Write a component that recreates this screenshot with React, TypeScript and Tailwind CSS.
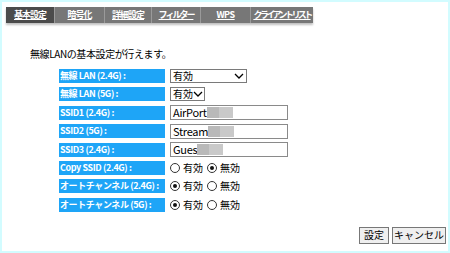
import React from 'react';

const tabs = [
  { label: '基本設定', w: 'w-[48px]', track: 'tracking-[-1px]' },
  { label: '暗号化', w: 'w-[50px]', track: 'tracking-[-1px]' },
  { label: '詳細設定', w: 'w-[47px]', track: 'tracking-[-1px]' },
  { label: 'フィルター', w: 'w-[49px]', track: 'tracking-[-2px]' },
  { label: 'WPS', w: 'w-[50px]', track: 'tracking-[-0.5px]' },
  { label: 'クライアントリスト', w: 'w-[63px]', track: 'tracking-[-2.6px]' },
];

const Label = ({ children }: { children: React.ReactNode }) => (
  <div className="w-[106px] h-[14px] bg-[#1ea5f7] text-white text-[9px] leading-[14px] pl-[1px] font-semibold tracking-[-0.4px] whitespace-nowrap overflow-hidden">
    {children}
  </div>
);

const Chevron = () => (
  <svg width="10" height="6" viewBox="0 0 10 6" className="shrink-0">
    <path d="M1 1 L5 5 L9 1" fill="none" stroke="#000" strokeWidth="1.3" />
  </svg>
);

const Select = ({ wide }: { wide?: boolean }) => (
  <div className={`${wide ? 'w-[77px]' : 'w-[35px]'} h-[14px] border border-[#7a7a7a] bg-white flex items-center justify-between pl-[2px] pr-[2px] text-[10px] leading-none whitespace-nowrap`}>
    <span>有効</span>
    <Chevron />
  </div>
);

const TextInput = ({ value }: { value: string }) => (
  <div className="w-[118px] h-[15px] border border-[#8a8a8a] bg-white flex items-center pl-[2px] text-[11px] leading-none tracking-[-0.3px]">
    <span>{value}</span>
    <span className="w-[12px] h-[11px] bg-[#b9b9b9]" />
    <span className="w-[14px] h-[11px] bg-[#c9c9c9]" />
  </div>
);

const Radio = ({ checked }: { checked?: boolean }) => (
  <span className="w-[10px] h-[10px] rounded-full border border-[#333] bg-white flex items-center justify-center">
    {checked && <span className="w-[4px] h-[4px] rounded-full bg-[#111]" />}
  </span>
);

const Radios = ({ first }: { first: boolean }) => (
  <div className="flex items-center text-[10px] leading-none">
    <div className="flex items-center gap-[3px] w-[37px]">
      <Radio checked={first} />
      <span>有効</span>
    </div>
    <div className="flex items-center gap-[3px]">
      <Radio checked={!first} />
      <span>無効</span>
    </div>
  </div>
);

const rows: { label: string; field: React.ReactNode }[] = [
  { label: '無線 LAN (2.4G) :', field: <Select wide /> },
  { label: '無線 LAN (5G) :', field: <Select /> },
  { label: 'SSID1 (2.4G) :', field: <TextInput value="AirPort" /> },
  { label: 'SSID2 (5G) :', field: <TextInput value="Stream" /> },
  { label: 'SSID3 (2.4G) :', field: <TextInput value="Gues" /> },
  { label: 'Copy SSID (2.4G) :', field: <Radios first={false} /> },
  { label: 'オートチャンネル (2.4G) :', field: <Radios first /> },
  { label: 'オートチャンネル (5G) :', field: <Radios first /> },
];

export default function App() {
  return (
    <div
      className="w-[450px] h-[253px] border-2 border-[#d2fcff] bg-white text-black overflow-hidden"
      style={{ fontFamily: '"Noto Sans CJK JP", "Liberation Sans", sans-serif' }}
    >
      {/* Tab bar */}
      <div className="mt-[5px] ml-[4px] flex h-[16px] w-fit bg-[#777] shadow-[0_2px_2px_rgba(0,0,0,0.25)]">
        {tabs.map((t, i) => (
          <div
            key={t.label}
            className={`${t.w} ${t.track} h-full flex items-center justify-center text-[9px] font-bold text-white underline whitespace-nowrap ${
              i === 0 ? 'bg-[#4b4b4b]' : 'border-l border-[#9a9a9a]'
            }`}
          >
            {t.label}
          </div>
        ))}
      </div>

      <p className="mt-[26px] ml-[28px] text-[10px] leading-none tracking-[-0.4px]">無線LANの基本設定が行えます。</p>

      {/* Settings table */}
      <div className="mt-[10px] ml-[57px] flex flex-col gap-[4.4px]">
        {rows.map((r) => (
          <div key={r.label} className="flex items-center gap-[5px] h-[14px]">
            <Label>{r.label}</Label>
            {r.field}
          </div>
        ))}
      </div>

      {/* Buttons */}
      <div className="mt-[15px] mr-[2px] flex justify-end gap-[3px]">
        <button className="w-[30px] h-[17px] border border-[#777] bg-[#efefef] text-[10px] leading-none">設定</button>
        <button className="w-[54px] h-[17px] border border-[#777] bg-[#efefef] text-[10px] leading-none">キャンセル</button>
      </div>
    </div>
  );
}
